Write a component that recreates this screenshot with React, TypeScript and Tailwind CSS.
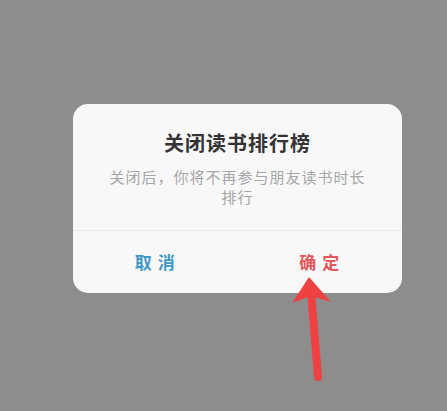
export default function App() {
  return (
    <div className="relative w-[447px] h-[411px] bg-[#8d8d8d] pt-[104px] pl-[73px] font-['Noto_Sans_CJK_SC','Noto_Sans',sans-serif]">
      {/* Confirm dialog */}
      <div className="w-[329px] h-[189px] bg-[#f8f8f8] rounded-[15px] flex flex-col">
        <div className="flex flex-col items-center px-8 pt-[25px] pb-[23px] border-b border-[#e9e9e9]">
          <h2 className="text-[20px] leading-[28px] font-bold text-[#333333] tracking-[1px]">
            关闭读书排行榜
          </h2>
          <p className="mt-[10px] text-[15px] leading-[20px] text-[#a6a6a6] text-center tracking-[1px]">
            关闭后，你将不再参与朋友读书时长排行
          </p>
        </div>
        <div className="flex flex-1 items-center">
          <button className="flex-1 text-[17px] font-bold text-[#3f97c6] tracking-[1px]">
            取 消
          </button>
          <button className="flex-1 text-[17px] font-bold text-[#e2575a] tracking-[1px]">
            确 定
          </button>
        </div>
      </div>

      {/* Pointer arrow */}
      <svg
        className="absolute left-0 top-0 pointer-events-none"
        width="447"
        height="411"
        viewBox="0 0 447 411"
      >
        <line
          x1="311"
          y1="292"
          x2="318"
          y2="377"
          stroke="#ef4141"
          strokeWidth="8"
          strokeLinecap="round"
        />
        <polygon points="309,277 292,303 311,296 331,302" fill="#ef4141" />
      </svg>
    </div>
  );
}
